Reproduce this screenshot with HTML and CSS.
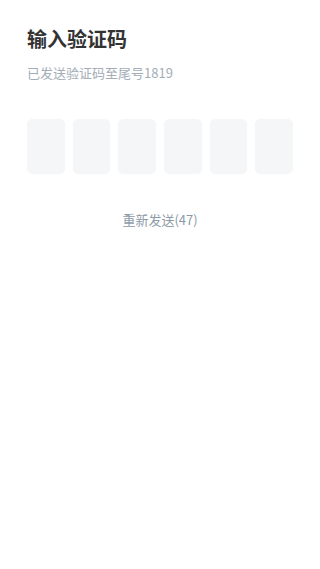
FILE: index.html
```html
<!DOCTYPE html>
<html lang="zh">
<head>
<meta charset="utf-8">
<meta name="viewport" content="width=device-width, initial-scale=1">
<title>输入验证码</title>
<link rel="stylesheet" href="styles.css">
</head>
<body>
<main class="page">
  <h1 class="title">输入验证码</h1>
  <p class="subtitle">已发送验证码至尾号1819</p>
  <div class="code-row">
    <div class="code-box"></div>
    <div class="code-box"></div>
    <div class="code-box"></div>
    <div class="code-box"></div>
    <div class="code-box"></div>
    <div class="code-box"></div>
  </div>
  <p class="resend">重新发送(47)</p>
</main>
</body>
</html>
```
FILE: styles.css
```css
html, body {
  margin: 0;
  padding: 0;
  background: #ffffff;
}
body {
  font-family: "Noto Sans CJK SC", "Noto Sans", sans-serif;
}
.page {
  padding: 25px 27px 0;
  display: flex;
  flex-direction: column;
}
.title {
  margin: 0;
  font-size: 20px;
  line-height: 28px;
  font-weight: 700;
  color: #333333;
}
.subtitle {
  margin: 11px 0 0;
  font-size: 13px;
  line-height: 18px;
  color: #a3adb7;
}
.code-row {
  margin-top: 37px;
  display: flex;
  gap: 8px;
}
.code-box {
  flex: 1;
  height: 55px;
  border-radius: 6px;
  background: #f5f6f8;
  box-shadow: 0 0 1px rgba(0, 0, 0, 0.06);
}
.resend {
  margin: 37px 0 0;
  text-align: center;
  font-size: 13px;
  line-height: 18px;
  color: #8d9aa7;
}
```
